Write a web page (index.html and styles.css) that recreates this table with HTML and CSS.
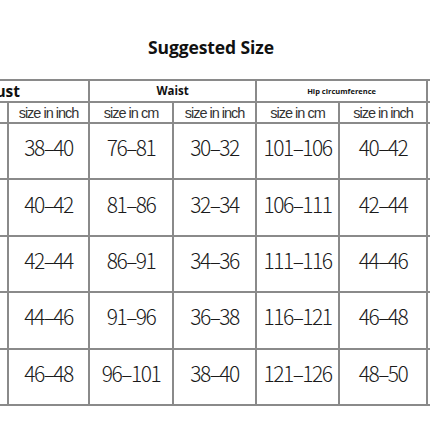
FILE: index.html
```html
<!DOCTYPE html>
<html>
<head>
<meta charset="utf-8">
<link rel="stylesheet" href="styles.css">
</head>
<body>
<div class="page">
  <h1 class="title">Suggested Size</h1>
  <table class="size-table">
    <colgroup>
      <col class="c1"><col class="c2"><col class="c3"><col class="c4"><col class="c5"><col class="c6"><col class="c7">
    </colgroup>
    <tr class="head1">
      <th colspan="2" class="big">Bust</th>
      <th colspan="2" class="mid">Waist</th>
      <th colspan="2" class="small">Hip circumference</th>
      <th></th>
    </tr>
    <tr class="head2">
      <td class="off">size in cm</td><td>size in inch</td>
      <td>size in cm</td><td>size in inch</td>
      <td>size in cm</td><td>size in inch</td>
      <td></td>
    </tr>
    <tr class="row">
      <td class="off">96–101</td><td>38–40</td><td>76–81</td><td>30–32</td><td>101–106</td><td>40–42</td><td></td>
    </tr>
    <tr class="row">
      <td class="off">101–106</td><td>40–42</td><td>81–86</td><td>32–34</td><td>106–111</td><td>42–44</td><td></td>
    </tr>
    <tr class="row">
      <td class="off">106–111</td><td>42–44</td><td>86–91</td><td>34–36</td><td>111–116</td><td>44–46</td><td></td>
    </tr>
    <tr class="row">
      <td class="off">111–116</td><td>44–46</td><td>91–96</td><td>36–38</td><td>116–121</td><td>46–48</td><td></td>
    </tr>
    <tr class="row">
      <td class="off">116–121</td><td>46–48</td><td>96–101</td><td>38–40</td><td>121–126</td><td>48–50</td><td></td>
    </tr>
  </table>
</div>
</body>
</html>
```

FILE: styles.css
```css
html, body {
  margin: 0;
  padding: 0;
  background: #ffffff;
}
.page {
  width: 430px;
  height: 430px;
  overflow: hidden;
  background: #ffffff;
}
.title {
  margin: 0;
  padding: 36px 8px 21px 0;
  text-align: center;
  font-family: "Open Sans", "Liberation Sans", sans-serif;
  font-weight: 700;
  font-size: 17.5px;
  line-height: 22px;
  color: #111;
  letter-spacing: -0.1px;
}
.size-table {
  margin-left: -75px;
  border-collapse: collapse;
  table-layout: fixed;
  width: 530px;
}
.c1 { width: 82px; }
.c2 { width: 81px; }
.c3 { width: 84px; }
.c4 { width: 83px; }
.c5 { width: 83px; }
.c6 { width: 88px; }
.c7 { width: 29px; }
.size-table th,
.size-table td {
  border: 2px solid #8a8a8a;
  padding: 0;
  text-align: center;
  color: #1a1a1a;
  overflow: hidden;
  white-space: nowrap;
}
.size-table td.off {
  text-align: left;
  padding-left: 2px;
}
.head1 th {
  height: 20px;
  line-height: 18px;
  font-family: "Open Sans", "Liberation Sans", sans-serif;
  font-weight: 700;
  color: #111;
}
.head1 .big {
  font-size: 15.5px;
  padding-right: 10px;
}
.head1 .mid { font-size: 11.5px; }
.head1 .small { font-size: 7.5px; }
.head2 td {
  height: 19px;
  font-family: "Liberation Sans", Arial, sans-serif;
  font-size: 14.5px;
  letter-spacing: -1px;
  color: #333;
}
.row td {
  height: 46.4px;
  font-family: "Noto Sans CJK KR", "Noto Sans", sans-serif;
  font-weight: 300;
  font-size: 21px;
  letter-spacing: -1.5px;
  padding-bottom: 8px;
  color: #1a1a1a;
}
```
